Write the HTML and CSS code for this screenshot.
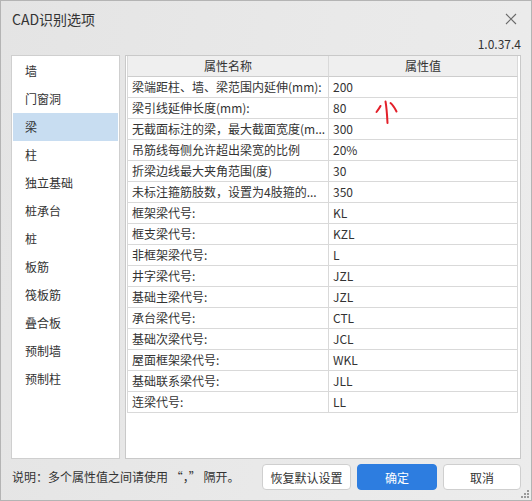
FILE: index.html
```html
<!DOCTYPE html>
<html lang="zh-CN">
<head>
<meta charset="utf-8">
<title>CAD识别选项</title>
<link rel="stylesheet" href="styles.css">
</head>
<body>
<div class="window">
  <div class="titlebar">
    <span class="title">CAD识别选项</span>
    <svg class="close" width="12" height="12" viewBox="0 0 12 12"><path d="M1 1L11 11M11 1L1 11" stroke="#6a6a6a" stroke-width="1.1" fill="none"/></svg>
  </div>
  <div class="version">1.0.37.4</div>
  <div class="main">
    <ul class="cats">
      <li>墙</li>
      <li>门窗洞</li>
      <li class="sel">梁</li>
      <li>柱</li>
      <li>独立基础</li>
      <li>桩承台</li>
      <li>桩</li>
      <li>板筋</li>
      <li>筏板筋</li>
      <li>叠合板</li>
      <li>预制墙</li>
      <li>预制柱</li>
    </ul>
    <div class="frame">
      <div class="grid">
        <div class="hd">属性名称</div><div class="hd">属性值</div>
        <div class="c1">梁端距柱、墙、梁范围内延伸(mm):</div><div class="c2">200</div>
        <div class="c1">梁引线延伸长度(mm):</div><div class="c2">80</div>
        <div class="c1">无截面标注的梁，最大截面宽度(m...</div><div class="c2">300</div>
        <div class="c1">吊筋线每侧允许超出梁宽的比例</div><div class="c2">20%</div>
        <div class="c1">折梁边线最大夹角范围(度)</div><div class="c2">30</div>
        <div class="c1">未标注箍筋肢数，设置为4肢箍的...</div><div class="c2">350</div>
        <div class="c1">框架梁代号:</div><div class="c2">KL</div>
        <div class="c1">框支梁代号:</div><div class="c2">KZL</div>
        <div class="c1">非框架梁代号:</div><div class="c2">L</div>
        <div class="c1">井字梁代号:</div><div class="c2">JZL</div>
        <div class="c1">基础主梁代号:</div><div class="c2">JZL</div>
        <div class="c1">承台梁代号:</div><div class="c2">CTL</div>
        <div class="c1">基础次梁代号:</div><div class="c2">JCL</div>
        <div class="c1">屋面框架梁代号:</div><div class="c2">WKL</div>
        <div class="c1">基础联系梁代号:</div><div class="c2">JLL</div>
        <div class="c1">连梁代号:</div><div class="c2">LL</div>
      </div>
    </div>
  </div>
  <div class="footer">
    <span class="note">说明：多个属性值之间请使用 “，” 隔开。</span>
    <div class="btns">
      <button class="btn reset">恢复默认设置</button>
      <button class="btn primary">确定</button>
      <button class="btn cancel">取消</button>
    </div>
  </div>
  <svg class="grip" width="10" height="10" viewBox="0 0 10 10">
    <rect x="7" y="1" width="2" height="2" fill="#9a9a9a"/>
    <rect x="4" y="4" width="2" height="2" fill="#9a9a9a"/>
    <rect x="7" y="4" width="2" height="2" fill="#9a9a9a"/>
    <rect x="1" y="7" width="2" height="2" fill="#9a9a9a"/>
    <rect x="4" y="7" width="2" height="2" fill="#9a9a9a"/>
    <rect x="7" y="7" width="2" height="2" fill="#9a9a9a"/>
  </svg>
  <svg class="mark" width="30" height="30" viewBox="0 0 30 30">
    <path d="M12.5 2.5C13.5 8 14 14 14.5 24" stroke="#e3202a" stroke-width="2" fill="none" stroke-linecap="round"/>
    <path d="M7.5 7C6.5 9 5 11 3.5 13" stroke="#e3202a" stroke-width="2" fill="none" stroke-linecap="round"/>
    <path d="M17.5 4C20 6 22 9.5 23.5 12.5" stroke="#e3202a" stroke-width="2" fill="none" stroke-linecap="round"/>
  </svg>
</div>
</body>
</html>
```
FILE: styles.css
```css
* { box-sizing: border-box; }
html, body { margin: 0; padding: 0; }
body {
  width: 532px;
  height: 501px;
  font-family: "Noto Sans CJK SC", "Noto Sans", sans-serif;
  font-size: 12px;
  color: #333;
  overflow: hidden;
}
.window {
  position: relative;
  width: 532px;
  height: 501px;
  border: 1px solid #b4b4b4;
  background: linear-gradient(100deg, #e4e4e4 0%, #e9e9e9 55%, #ececec 100%);
  display: flex;
  flex-direction: column;
}
.titlebar {
  height: 36px;
  display: flex;
  align-items: center;
  justify-content: space-between;
  padding: 0 14px 0 11px;
}
.title {
  font-size: 14px;
  color: #333;
}
.close { display: block; }
.version {
  height: 14px;
  line-height: 14px;
  text-align: right;
  padding-right: 10px;
  color: #333;
}
.main {
  margin-top: 4px;
  height: 404px;
  display: flex;
  gap: 5px;
  padding: 0 10px;
}
.cats {
  list-style: none;
  margin: 0;
  padding: 1px 0 0;
  width: 109px;
  background: #fff;
  border: 1px solid #cfcfcf;
}
.cats li {
  height: 28px;
  line-height: 28px;
  padding-left: 12px;
  margin: 0 1px;
  color: #333;
}
.cats li.sel { background: #c8ddf1; }
.frame {
  flex: 1;
  background: #fff;
  border: 1px solid #c9c9c9;
  padding: 0 2px 0 1px;
}
.grid {
  display: grid;
  grid-template-columns: 202px 189px;
  grid-auto-rows: 21px;
}
.grid > div {
  border-bottom: 1px solid #d9d9d9;
  line-height: 20px;
  white-space: nowrap;
  overflow: hidden;
}
.hd {
  background: #efefef;
  text-align: center;
  border-bottom-color: #cdcdcd !important;
}
.grid > div:nth-child(odd) { border-right: 1px solid #d9d9d9; border-left: 1px solid #d9d9d9; }
.grid > div:nth-child(even) { border-right: 1px solid #d9d9d9; }
.c1, .c2 { padding-left: 4px; }
.c2 { padding-left: 4px; }
.footer {
  flex: 1;
  display: flex;
  align-items: flex-start;
  justify-content: space-between;
  padding: 5px 10px 0 11px;
}
.note {
  line-height: 26px;
  color: #333;
}
.btns { display: flex; gap: 6px; }
.btn {
  height: 26px;
  border-radius: 4px;
  font-family: "Noto Sans CJK SC", "Noto Sans", sans-serif;
  font-size: 12px;
  padding: 0;
  color: #333;
  background: #fff;
  border: 1px solid #cfcfcf;
}
.reset { width: 89px; }
.primary {
  width: 80px;
  background: #2d7de0;
  border-color: #2d7de0;
  color: #fff;
}
.cancel { width: 78px; }
.grip {
  position: absolute;
  right: 1px;
  bottom: 1px;
}
.mark {
  position: absolute;
  left: 372px;
  top: 98px;
}
```
